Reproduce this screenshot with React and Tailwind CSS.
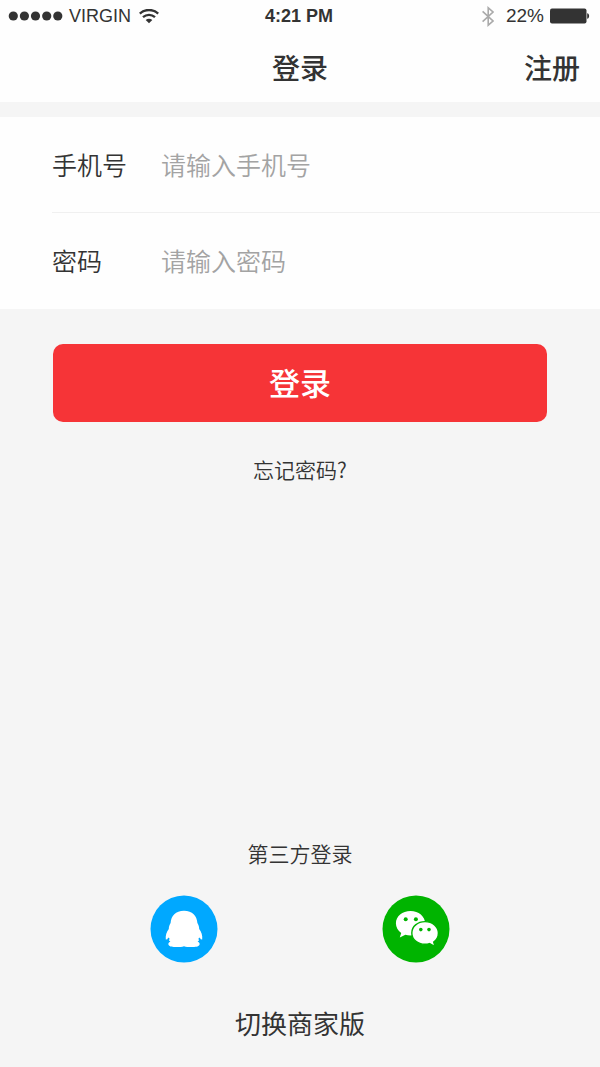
import React from 'react';

function WifiIcon() {
  return (
    <svg viewBox="0 0 20 15" className="h-[15px] w-5" fill="none" stroke="#333" aria-hidden="true">
      <path d="M.8 4.6C6-.2 14-.2 19.2 4.6" strokeWidth="2.4" />
      <path d="M4 8.1c3.500-3 8.500-3 12 0" strokeWidth="2.4" />
      <path d="M10 14.2 6.7 11c1.900-1.700 4.700-1.700 6.600 0z" fill="#333" stroke="none" />
    </svg>
  );
}

function BluetoothIcon() {
  return (
    <svg viewBox="0 0 12 21" className="h-[21px] w-3" fill="none" stroke="#aaa" strokeWidth="1.6" aria-hidden="true">
      <path d="M.6 5.4 11 15 6.2 19.2V1.8L11 6 .6 15.6" />
    </svg>
  );
}

function BatteryIcon() {
  return (
    <svg viewBox="0 0 40 16" className="h-4 w-10" fill="#333" aria-hidden="true">
      <rect x="0" y="0.5" width="36.5" height="15" rx="2" />
      <path d="M37.2 5.2c2.6.4 2.6 5.2 0 5.6z" />
    </svg>
  );
}

function StatusBar() {
  return (
    <div className="grid h-8 grid-cols-3 items-center pr-[10px] pl-2 font-['Liberation_Sans',Arial,sans-serif] text-[19px] leading-8 text-[#333]">
      <div className="flex items-center">
        <svg viewBox="0 0 55 10" className="h-[10px] w-[55px]" fill="#333" aria-hidden="true">
          <circle cx="5.3" cy="5" r="4.6" />
          <circle cx="16.4" cy="5" r="4.6" />
          <circle cx="27.5" cy="5" r="4.6" />
          <circle cx="38.7" cy="5" r="4.6" />
          <circle cx="49.8" cy="5" r="4.6" />
        </svg>
        <span className="mr-2 ml-[6px] text-[18px]">VIRGIN</span>
        <WifiIcon />
      </div>
      <div className="text-center text-[18px] font-bold">4:21 PM</div>
      <div className="flex items-center justify-end">
        <BluetoothIcon />
        <span className="mr-[6px] ml-3">22%</span>
        <BatteryIcon />
      </div>
    </div>
  );
}

function Field({ id, label, type, placeholder, divided }) {
  return (
    <div className={divided ? 'ml-[52px] flex h-24 items-center border-b border-[#f0f0f0] pb-[2px]' : 'ml-[52px] flex h-24 items-center pb-[2px]'}>
      <label htmlFor={id} className="w-[109px] shrink-0 text-[25px] leading-10 font-[350] text-[#333]">
        {label}
      </label>
      <input
        id={id}
        type={type}
        placeholder={placeholder}
        className="h-10 min-w-0 flex-1 bg-transparent text-[25px] leading-10 font-[350] text-[#333] outline-none placeholder:text-[#a3a3a3]"
      />
    </div>
  );
}

function QQIcon() {
  return (
    <svg viewBox="0 0 68 68" className="h-[68px] w-[68px]" aria-hidden="true">
      <circle cx="34" cy="34" r="33.5" fill="#00a8ff" />
      <path
        fill="#fff"
        d="M34 15.8C42.5 15.8 46.8 21 47.4 28C48.6 29.8 49.2 32 49.2 34C51.4 36.8 52.7 40.6 52.2 44.5L50.6 44.2L49.9 42.6L48.4 43.6L49 45.4L47.6 46.4C49.4 47.2 50 48.6 49.4 50C48.6 51.8 45 52 41.7 52C38.3 52 35.900 52 34 51.2C32.1 52 29.7 52 26.3 52C23 52 19.4 51.8 18.600 50C18 48.600 18.600 47.200 20.400 46.400L19 45.400L19.600 43.600L18.100 42.600L17.400 44.200L15.800 44.500C15.300 40.600 16.600 36.800 18.800 34C18.800 32 19.400 29.800 20.600 28C21.200 21 25.500 15.800 34 15.800Z"
      />
    </svg>
  );
}

function WeChatIcon() {
  return (
    <svg viewBox="0 0 68 68" className="h-[68px] w-[68px]" aria-hidden="true">
      <circle cx="34" cy="34" r="33.5" fill="#00b400" />
      <path
        fill="#fff"
        d="M28.5 16.1c-8.2 0-14.6 5.4-14.600 12.200 0 3.900 2 7.400 5.300 9.600l-1.400 4.700 5.600-2.900c1.600.5 3.300.7 5.100.7 8.200 0 14.600-5.400 14.600-12.100s-6.400-12.200-14.600-12.200z"
      />
      <path
        fill="#fff"
        stroke="#00b400"
        strokeWidth="1.4"
        d="M43 26.600c-7.400 0-13.200 4.900-13.200 11.300s5.800 11.400 13.200 11.400c1.600 0 3.100-.2 4.500-.7l5.500 3-1.300-4.500c2.900-2.100 4.700-5.300 4.700-9.100 0-6.400-5.900-11.400-13.400-11.400z"
      />
      <g fill="#00b400">
        <circle cx="23.7" cy="24.2" r="2" />
        <circle cx="33.9" cy="24.2" r="2" />
        <circle cx="38.8" cy="34.6" r="1.8" />
        <circle cx="47" cy="34.6" r="1.8" />
      </g>
    </svg>
  );
}

export default function App() {
  return (
    <div className="flex min-h-screen flex-col bg-[#f5f5f5] font-['Noto_Sans_CJK_SC',sans-serif] text-[#333]">
      <header className="bg-[#fefefe]">
        <StatusBar />
        <nav className="grid h-[70px] grid-cols-3 items-center px-5 text-[28px] leading-10 font-medium">
          <h1 className="col-start-2 text-center">登录</h1>
          <a href="#register" className="justify-self-end">注册</a>
        </nav>
      </header>

      <form className="mt-[15px] flex flex-col" onSubmit={(e) => e.preventDefault()}>
        <div className="bg-[#fefefe]">
          <Field id="phone" label="手机号" type="tel" placeholder="请输入手机号" divided />
          <Field id="password" label="密码" type="password" placeholder="请输入密码" />
        </div>
        <button type="submit" className="mx-[53px] mt-[35px] h-[78px] rounded-[10px] bg-[#f63437] pb-[2px] text-[31px] font-medium text-white">
          登录
        </button>
      </form>
      <a href="#forgot" className="mt-[31px] self-center text-[21px] leading-8 font-[350]">忘记密码?</a>

      <footer className="mt-auto flex flex-col items-center pt-16 pb-6">
        <h2 className="text-[21px] leading-8 font-[350]">第三方登录</h2>
        <div className="mt-[26px] flex justify-center gap-[164px]">
          <button type="button" aria-label="QQ">
            <QQIcon />
          </button>
          <button type="button" aria-label="微信">
            <WeChatIcon />
          </button>
        </div>
        <a href="#merchant" className="mt-10 text-[26px] leading-10">切换商家版</a>
      </footer>
    </div>
  );
}
